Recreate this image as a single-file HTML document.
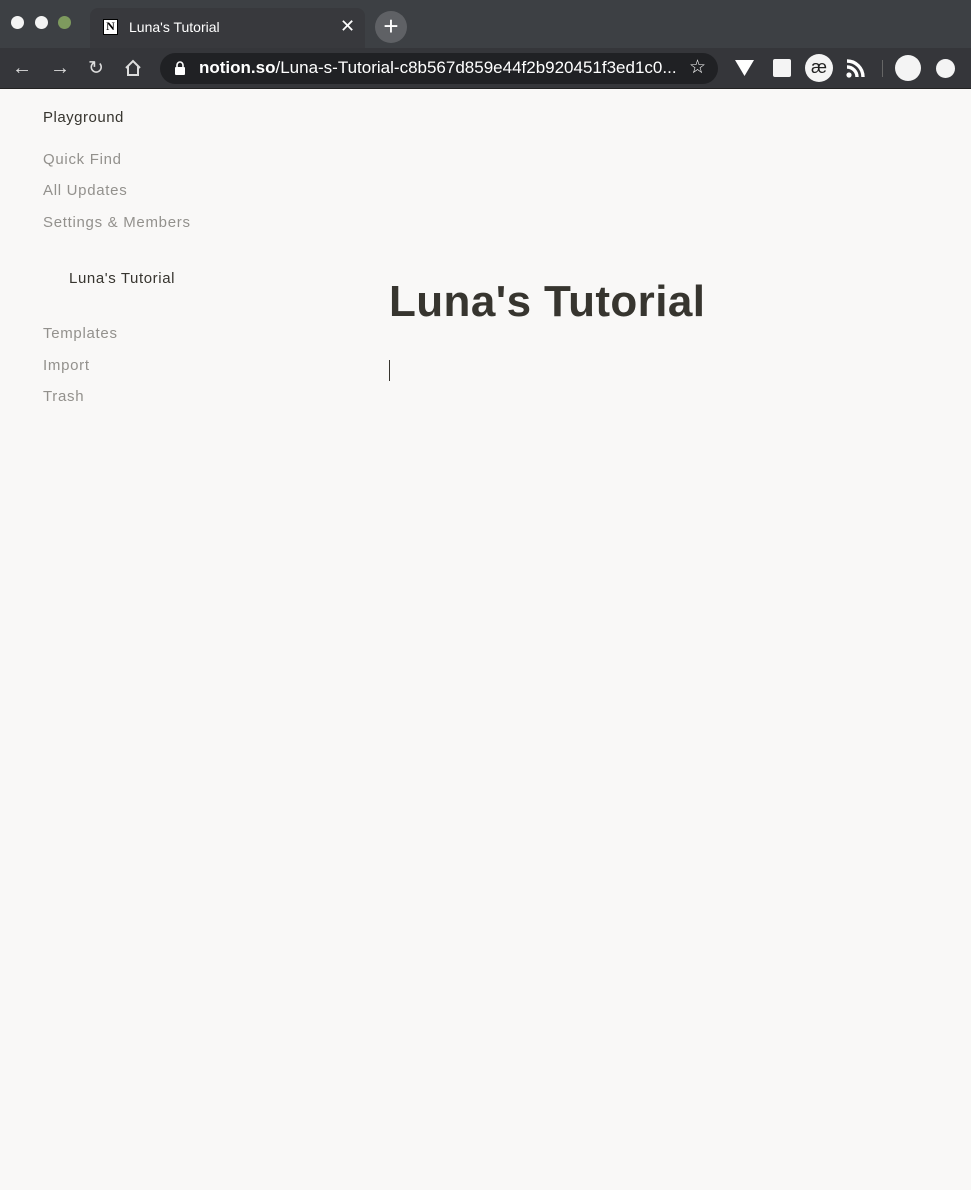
<!DOCTYPE html>
<html><head><meta charset="utf-8"><style>
*{margin:0;padding:0;box-sizing:border-box}
body{width:971px;height:1190px;background:#f9f8f7;font-family:"Liberation Sans",sans-serif;position:relative;overflow:hidden}
.top{position:absolute;left:0;top:0;width:971px;height:48px;background:#3d4044}
.tab{position:absolute;left:90px;top:8px;width:275px;height:40px;background:#38393d;border-radius:8px 8px 0 0}
.bar{position:absolute;left:0;top:48px;width:971px;height:41px;background:#35363a;border-bottom:1px solid #222}
.dot{position:absolute;top:16px;width:13px;height:13px;border-radius:50%;background:#f4f4f4}
.addr{position:absolute;left:160px;top:53px;width:558px;height:31px;border-radius:16px;background:#202124}
.t{position:absolute;color:#fff;white-space:nowrap}
.side{position:absolute;left:43px;font-size:15px;color:#93918d;white-space:nowrap;letter-spacing:0.7px}
.w{position:absolute;background:#f4f4f4}
</style></head><body>
<div class="top"></div>
<div class="tab"></div>
<div class="dot" style="left:11px"></div>
<div class="dot" style="left:35px"></div>
<div class="dot" style="left:58px;background:#7e9a5e"></div>
<div style="position:absolute;left:103px;top:19px;width:15px;height:16px;background:#fff;border:1.5px solid #000;font:bold 12px 'Liberation Serif',serif;text-align:center;line-height:13px;color:#000">N</div>
<div class="t" style="left:129px;top:19px;font-size:14px">Luna's Tutorial</div>
<div class="t" style="left:340px;top:16px;font-size:18px">✕</div>
<div style="position:absolute;left:375px;top:11px;width:32px;height:32px;border-radius:50%;background:#5f6165;color:#fff;font-size:26px;text-align:center;line-height:31px">+</div>
<div class="bar"></div>
<div class="t" style="left:12px;top:57px;font-size:20px;color:#ddd">←</div>
<div class="t" style="left:50px;top:57px;font-size:20px;color:#ddd">→</div>
<div class="t" style="left:88px;top:57px;font-size:19px;color:#ddd">↻</div>
<svg style="position:absolute;left:124px;top:59px" width="18" height="18" viewBox="0 0 18 18"><path d="M2 9L9 2l7 7M4 7v9h10V7" fill="none" stroke="#ddd" stroke-width="2"/></svg>
<div class="addr"></div>
<svg style="position:absolute;left:174px;top:61px" width="12" height="14"><path d="M3 6V4a3 3 0 0 1 6 0v2" fill="none" stroke="#fff" stroke-width="1.6"/><rect x="1" y="6" width="10" height="8" rx="1" fill="#fff"/></svg>
<div class="t" style="left:199px;top:58px;font-size:17px;color:#fff"><b>notion.so</b>/Luna-s-Tutorial-c8b567d859e44f2b920451f3ed1c0...</div>
<div class="t" style="left:689px;top:56px;font-size:19px">☆</div>
<svg style="position:absolute;left:735px;top:60px" width="19" height="16"><path d="M0 0h19L9.5 16z" fill="#fff"/></svg>
<div class="w" style="left:773px;top:59px;width:18px;height:18px;border-radius:2px"></div>
<div class="w" style="left:805px;top:54px;width:28px;height:28px;border-radius:50%;color:#222;font-size:18px;text-align:center;line-height:26px">æ</div>
<svg style="position:absolute;left:846px;top:59px" width="19" height="19"><circle cx="3" cy="16" r="2.6" fill="#fff"/><path d="M1 8a10 10 0 0 1 10 10M1 2a16 16 0 0 1 16 16" fill="none" stroke="#fff" stroke-width="3.4"/></svg>
<div style="position:absolute;left:882px;top:60px;width:1px;height:17px;background:#666"></div>
<div class="w" style="left:895px;top:55px;width:26px;height:26px;border-radius:50%"></div>
<div class="w" style="left:936px;top:59px;width:19px;height:19px;border-radius:50%"></div>
<div class="side" style="top:109px;color:#37352f;letter-spacing:0.5px">Playground</div>
<div class="side" style="top:151px">Quick Find</div>
<div class="side" style="top:182px">All Updates</div>
<div class="side" style="top:214px">Settings &amp; Members</div>
<div class="side" style="top:270px;left:69px;color:#37352f;letter-spacing:0.6px">Luna's Tutorial</div>
<div class="side" style="top:325px">Templates</div>
<div class="side" style="top:357px">Import</div>
<div class="side" style="top:388px">Trash</div>
<div style="position:absolute;left:389px;top:277px;font-size:44px;font-weight:bold;color:#37352f;white-space:nowrap;letter-spacing:0.4px">Luna's Tutorial</div>
<div style="position:absolute;left:389px;top:360px;width:1px;height:21px;background:#37352f"></div>
</body></html>
